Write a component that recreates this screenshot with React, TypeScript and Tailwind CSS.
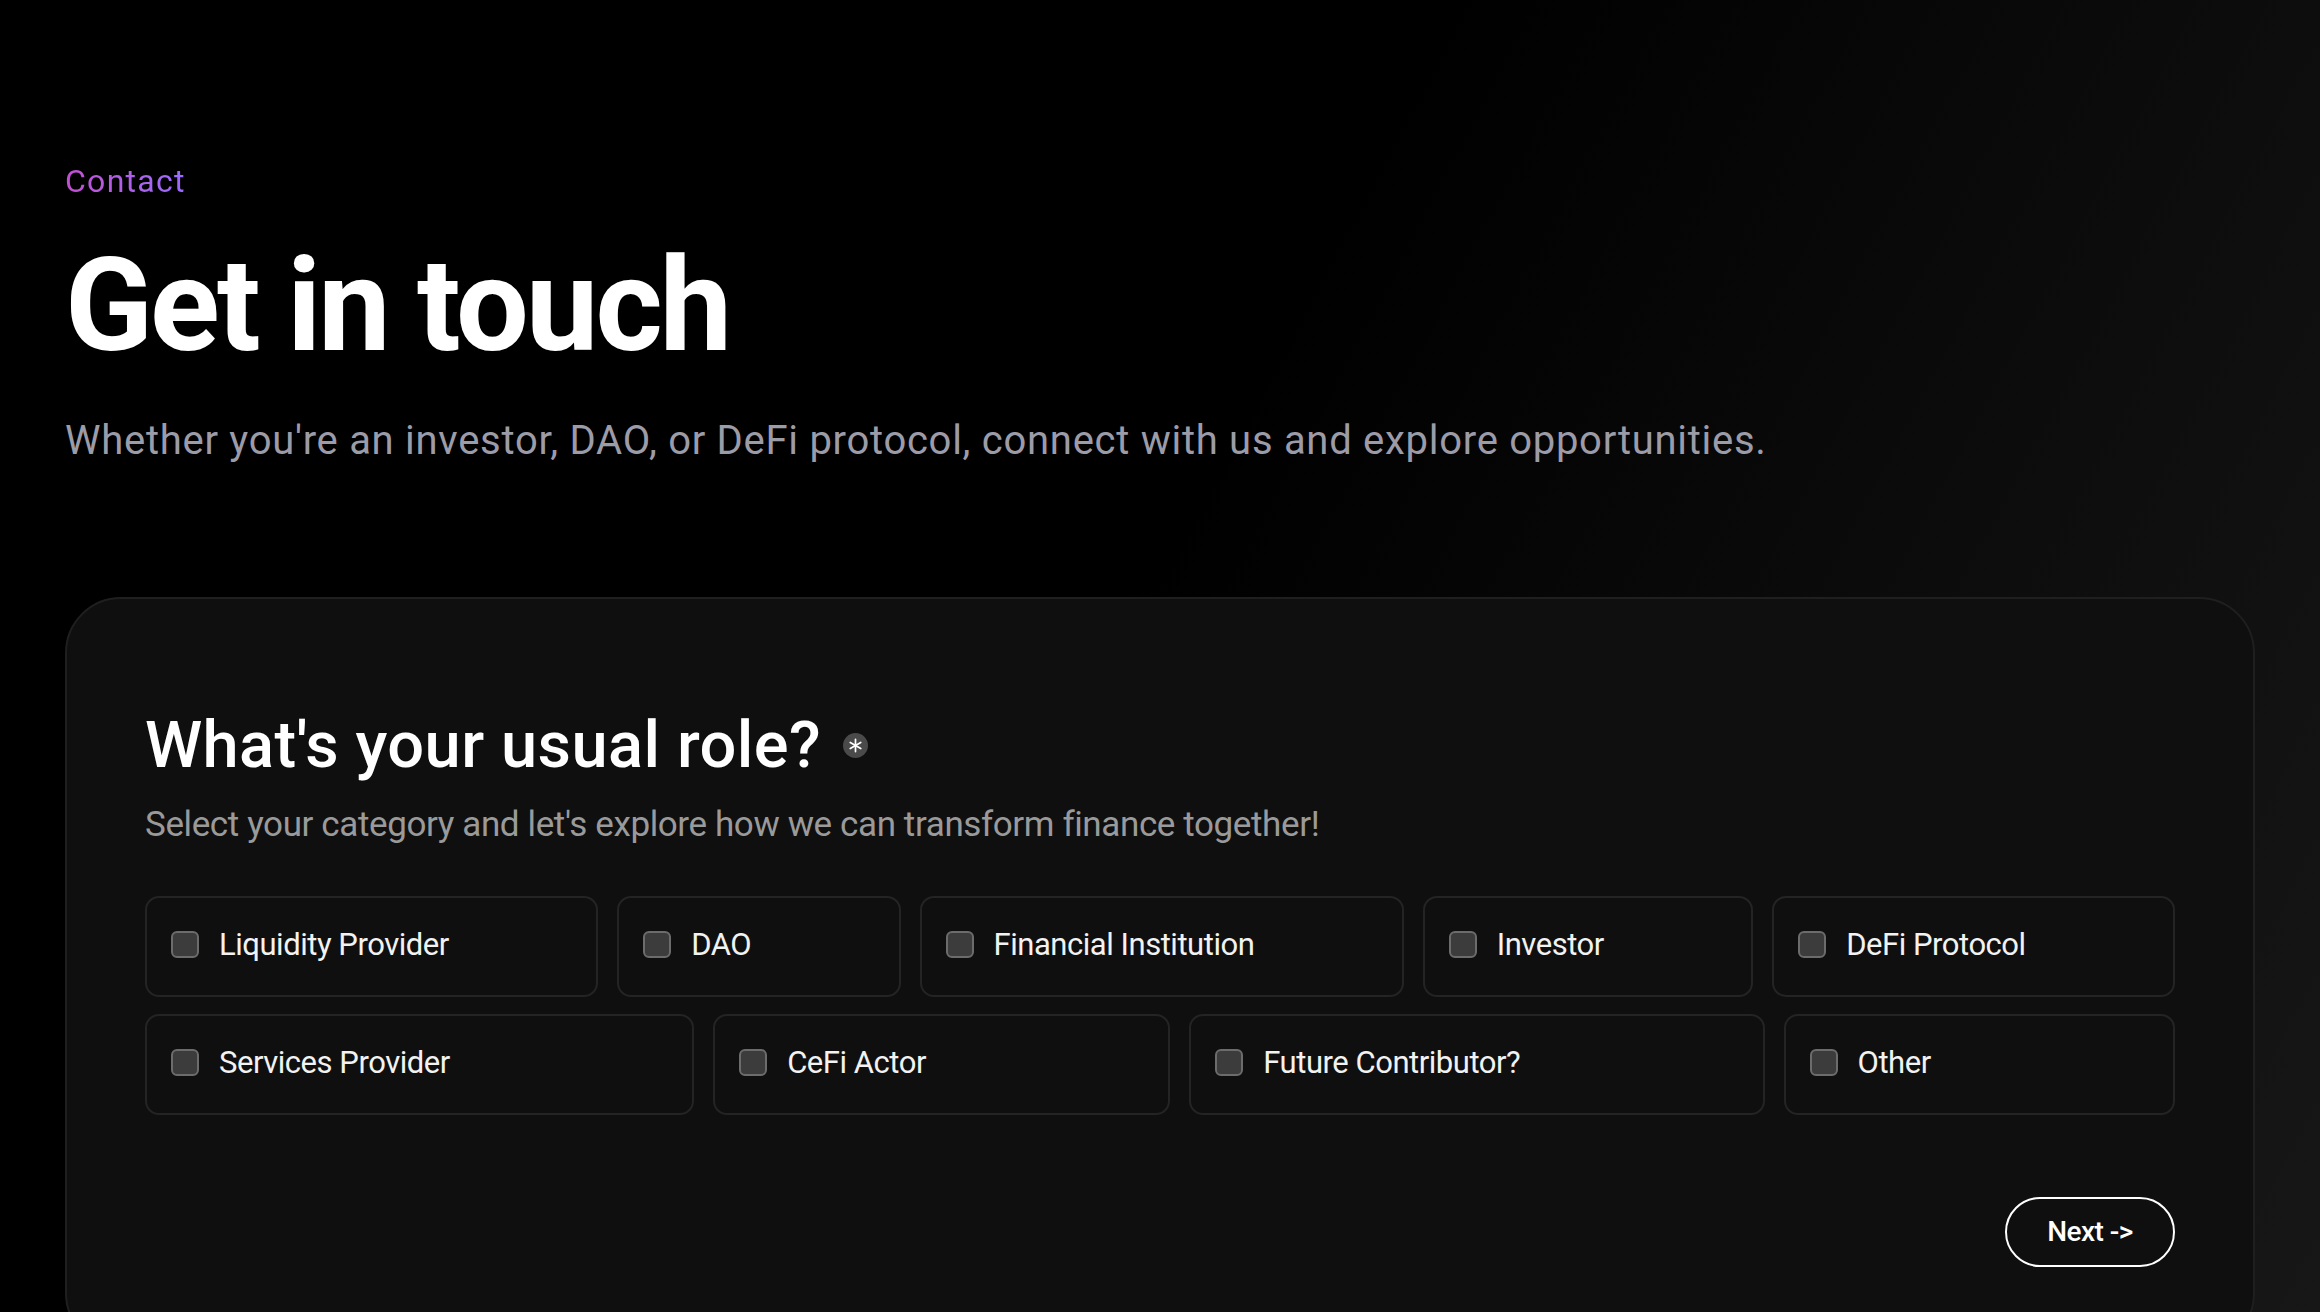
import React from "react";

const ROW_ONE = ["Liquidity Provider", "DAO", "Financial Institution", "Investor", "DeFi Protocol"];
const ROW_TWO = ["Services Provider", "CeFi Actor", "Future Contributor?", "Other"];

function RoleOption({ label }: { label: string }) {
  return (
    <label className="flex-grow flex items-center gap-[20px] h-[101px] pl-[24px] pr-[40px] pb-[4px] border-2 border-[#242424] rounded-[14px] bg-[#0f0f0f] cursor-pointer">
      <span className="w-[28px] h-[27px] shrink-0 rounded-[6px] bg-[#3c3c3c] border-2 border-[#6c6c6c]" />
      <span className="text-[31px] leading-none tracking-[-0.015em] text-[#f2f2f2] whitespace-nowrap">{label}</span>
    </label>
  );
}

function RequiredBadge() {
  return (
    <span className="w-[25px] h-[25px] rounded-full bg-[#4a4a4a] flex items-center justify-center">
      <svg width="15" height="15" viewBox="0 0 16 16" fill="none" stroke="#ffffff" strokeWidth="1.8" strokeLinecap="round">
        <line x1="8" y1="1.5" x2="8" y2="14.5" />
        <line x1="2.4" y1="4.75" x2="13.6" y2="11.25" />
        <line x1="2.4" y1="11.25" x2="13.6" y2="4.75" />
      </svg>
    </span>
  );
}

export default function App() {
  return (
    <div
      className="h-screen overflow-hidden px-[65px] bg-[linear-gradient(118deg,#000000_48%,#0b0b0b_72%,#171717_100%)]"
      style={{ fontFamily: "Roboto, 'Liberation Sans', sans-serif" }}
    >
      {/* Header */}
      <div className="pt-[165px]">
        <div className="text-[32px] leading-none tracking-[0.04em] bg-gradient-to-r from-[#c24fd2] to-[#9a6cff] bg-clip-text text-transparent w-fit">
          Contact
        </div>
        <h1 className="mt-[44px] text-[129px] leading-none font-bold tracking-[-0.022em] text-white">
          Get in touch
        </h1>
        <p className="mt-[51px] text-[40px] leading-none tracking-[0.018em] text-[#9c9ca8]">
          Whether you're an investor, DAO, or DeFi protocol, connect with us and explore opportunities.
        </p>
      </div>

      {/* Form card */}
      <div className="mt-[136px] rounded-[56px] border-2 border-[#1f1f1f] bg-[#0f0f0f] px-[78px] pt-[114px] pb-[80px]">
        <div className="flex items-center gap-[22px]">
          <h2 className="text-[65px] leading-none font-medium tracking-[0.006em] text-white">
            What's your usual role?
          </h2>
          <RequiredBadge />
        </div>
        <p className="mt-[29px] text-[35px] leading-none tracking-[-0.011em] text-[#9a9a9a]">
          Select your category and let's explore how we can transform finance together!
        </p>

        <div className="mt-[54px] flex flex-col gap-[17px]">
          <div className="flex gap-[19px]">
            {ROW_ONE.map((r) => (
              <RoleOption key={r} label={r} />
            ))}
          </div>
          <div className="flex gap-[19px]">
            {ROW_TWO.map((r) => (
              <RoleOption key={r} label={r} />
            ))}
          </div>
        </div>

        <div className="mt-[82px] flex justify-end">
          <button className="w-[170px] h-[70px] rounded-full border-2 border-white text-white text-[28px] font-medium tracking-[-0.02em] leading-none">
            Next -&gt;
          </button>
        </div>
      </div>
    </div>
  );
}
